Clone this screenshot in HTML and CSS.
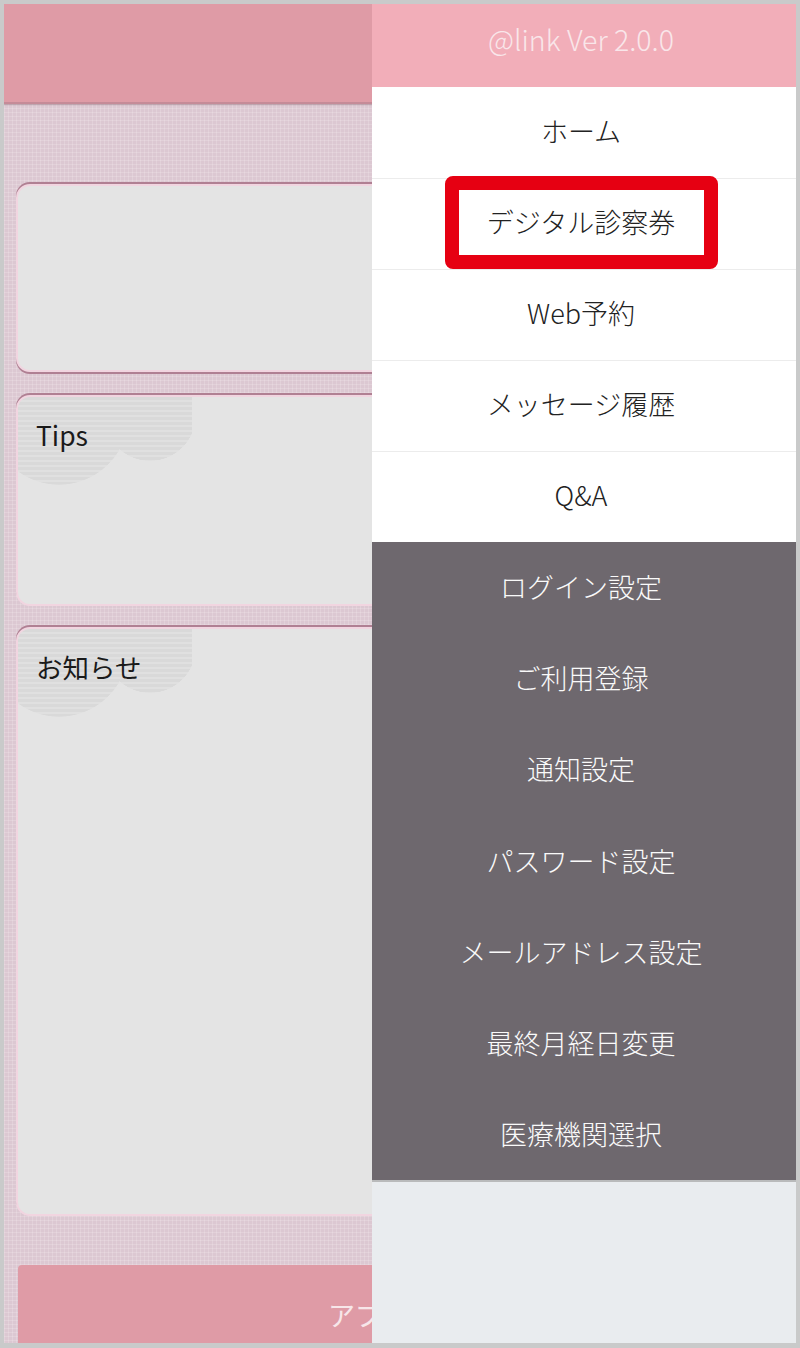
FILE: index.html
```html
<!DOCTYPE html>
<html lang="ja">

<head>
    <meta charset="UTF-8">
    <meta name="viewport" content="width=device-width, initial-scale=1.0">
    <title>@link</title>
    <link rel="stylesheet" href="styles.css">
</head>

<body>
    <div class="frame">
        <!-- Page behind the drawer -->
        <main class="app">
            <header class="app-header"></header>
            <section class="cards">
                <div class="card card-first"></div>
                <div class="card card-tips">
                    <h2 class="card-title">Tips</h2>
                </div>
                <div class="card card-news">
                    <h2 class="card-title">お知らせ</h2>
                </div>
            </section>
            <div class="app-button">アプ</div>
        </main>

        <!-- Drawer menu -->
        <aside class="drawer">
            <div class="drawer-header">@link Ver 2.0.0</div>
            <ul class="menu menu-light">
                <li>ホーム</li>
                <li class="highlighted">デジタル診察券</li>
                <li>Web予約</li>
                <li>メッセージ履歴</li>
                <li>Q&amp;A</li>
            </ul>
            <ul class="menu menu-dark">
                <li>ログイン設定</li>
                <li>ご利用登録</li>
                <li>通知設定</li>
                <li>パスワード設定</li>
                <li>メールアドレス設定</li>
                <li>最終月経日変更</li>
                <li>医療機関選択</li>
            </ul>
            <div class="drawer-rest"></div>
        </aside>
    </div>
</body>

</html>
```

FILE: styles.css
```css
*, *::before, *::after {
    box-sizing: border-box;
}
body {
    margin: 0;
    font-family: "Noto Sans CJK JP", "Noto Sans", sans-serif;
    font-size: 27px;
}
.frame {
    display: flex;
    height: 1348px;
    border: 4px solid #c9caca;
    border-bottom-width: 5px;
}
.app {
    width: 368px;
    overflow: hidden;
    background-color: #dcc8d2;
    background-image:
        linear-gradient(rgba(255, 255, 255, 0.16) 1px, transparent 1px),
        linear-gradient(90deg, rgba(255, 255, 255, 0.16) 1px, transparent 1px);
    background-size: 4px 4px;
}
.app-header {
    height: 100px;
    background-color: #df9ba6;
    border-bottom: 2px solid #c58b98;
    box-shadow: 0 1px 1px rgba(120, 80, 95, 0.35);
}
.cards {
    width: 768px;
    margin-left: 12px;
    padding-top: 80px;
}
.card {
    position: relative;
    overflow: hidden;
    border: 2px solid #f1d5e0;
    border-radius: 14px;
    background-color: #e4e4e4;
    box-shadow: 0 -2px 0 #b08093;
}
.card-first {
    height: 188px;
    box-shadow: 0 -2px 0 #b08093, 0 2px 0 #b08093;
}
.card-tips {
    height: 211px;
    margin-top: 23px;
}
.card-news {
    height: 589px;
    margin-top: 21px;
}
/* striped cloud behind the card title */
.card-tips::before,
.card-news::before {
    content: "";
    position: absolute;
    top: 0;
    left: 0;
    width: 174px;
    height: 100px;
    background: repeating-linear-gradient(#d9d9d9 0, #d9d9d9 3px, #e0e0e0 3px, #e0e0e0 5px);
    -webkit-mask-image:
        radial-gradient(circle 70px at 41px 18px, #000 99%, transparent 100%),
        radial-gradient(circle 46px at 132px 18px, #000 99%, transparent 100%);
    mask-image:
        radial-gradient(circle 70px at 41px 18px, #000 99%, transparent 100%),
        radial-gradient(circle 46px at 132px 18px, #000 99%, transparent 100%);
}
.card-title {
    position: relative;
    margin: 0;
    padding: 18px 0 0 18px;
    font-size: 26.5px;
    font-weight: 400;
    line-height: 40px;
    color: #1a1a1a;
}
.app-button {
    height: 78px;
    margin: 49px 0 0 14px;
    padding: 30px 0 0 310px;
    border-radius: 4px 0 0 0;
    background-color: #df9ba6;
    color: #f7e6e9;
    line-height: 40px;
    white-space: nowrap;
}
.drawer {
    display: flex;
    flex-direction: column;
    flex: 1;
    background-color: #e9ecef;
}
.drawer-header {
    height: 83px;
    padding-right: 6px;
    background-color: #f2aeb9;
    color: #f9e6ea;
    font-size: 28.5px;
    font-weight: 300;
    text-align: center;
    line-height: 70px;
}
.menu {
    margin: 0;
    padding: 0;
    list-style-type: none;
    background-color: white;
    color: #222;
    text-align: center;
    font-weight: 300;
}
.menu-light {
    padding-top: 1px;
}
.menu li {
    height: 91px;
    padding-right: 6px;
    line-height: 85px;
    border-bottom: 1px solid #ececec;
}
.menu li:last-child {
    height: 90px;
    border-bottom: none;
}
.highlighted {
    position: relative;
}
/* red annotation box round the menu item */
.highlighted::after {
    content: "";
    position: absolute;
    top: -3px;
    left: 73px;
    width: 273px;
    height: 93px;
    border: 14px solid #e60012;
    border-radius: 8px;
}
.menu-dark {
    background-color: #6e686e;
    color: #fafafa;
    border-bottom: 2px solid #b9babb;
}
.menu-dark li,
.menu-dark li:last-child {
    height: 91.2px;
    line-height: 89px;
    border-bottom: none;
}
.drawer-rest {
    flex: 1;
}
```
